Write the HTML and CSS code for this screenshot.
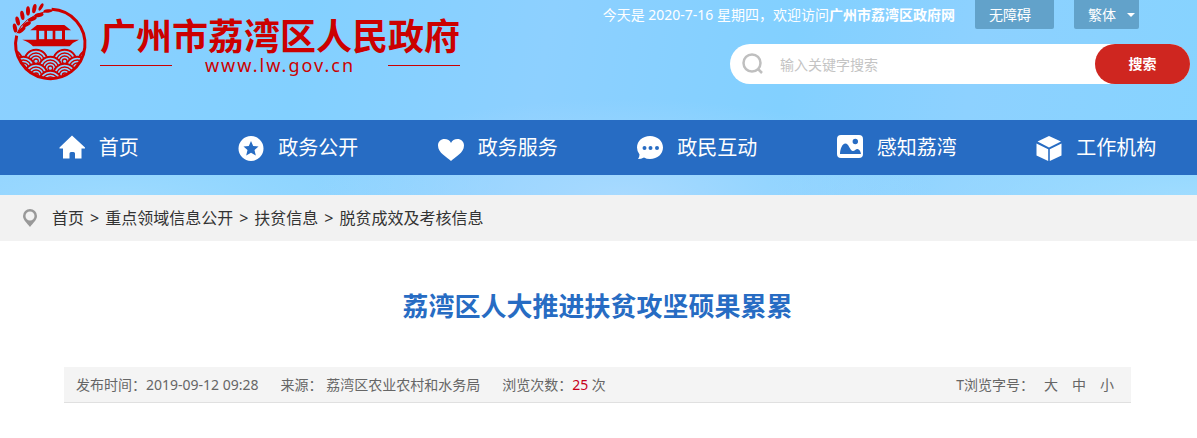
FILE: index.html
```html
<!DOCTYPE html>
<html lang="zh-CN">
<head>
    <meta charset="UTF-8">
    <meta name="viewport" content="width=device-width, initial-scale=1.0">
    <title>荔湾区人大推进扶贫攻坚硕果累累</title>
    <link rel="stylesheet" href="styles.css">
</head>
<body>
    <!-- 头部 -->
    <header class="header">
        <div class="header-top">
            <a class="logo" href="#">
                <svg class="logo-emblem" viewBox="0 0 270 258" aria-hidden="true">
                    <defs>
                        <clipPath id="sea"><circle cx="136" cy="132" r="101"/></clipPath>
                        <g id="wave">
                            <circle r="36" fill="#8bd2ff"/>
                            <circle r="34"/>
                            <circle r="25"/>
                            <circle r="16"/>
                            <circle r="7"/>
                        </g>
                    </defs>
                    <!-- 水波 -->
                    <g clip-path="url(#sea)" fill="none" stroke="#cc0000" stroke-width="4">
                        <use href="#wave" x="17" y="184"/><use href="#wave" x="93" y="184"/><use href="#wave" x="179" y="184"/><use href="#wave" x="255" y="184"/>
                        <use href="#wave" x="55" y="205"/><use href="#wave" x="136" y="205"/><use href="#wave" x="217" y="205"/>
                        <use href="#wave" x="17" y="226"/><use href="#wave" x="93" y="226"/><use href="#wave" x="179" y="226"/><use href="#wave" x="255" y="226"/>
                        <use href="#wave" x="55" y="247"/><use href="#wave" x="136" y="247"/><use href="#wave" x="217" y="247"/>
                    </g>
                    <path d="M140 28A104 104 0 1 1 35 107" fill="none" stroke="#cc0000" stroke-width="9"/>
                    <!-- 画舫 -->
                    <g fill="#cc0000">
                        <path d="M96 75H178L198 91H76Z"/>
                        <path fill-rule="evenodd" d="M94 88H180V121H94ZM102 92V118H118V92ZM126 92V118H143V92ZM151 92V118H171V92Z"/>
                        <path d="M52 119H222Q204 126 194 139H84Q72 125 52 119Z"/>
                    </g>
                    <!-- 稻穗 -->
                    <path d="M36 100Q54 52 126 33" fill="none" stroke="#cc0000" stroke-width="3"/>
                    <g fill="#cc0000">
                        <ellipse cx="30" cy="84" rx="6" ry="14" transform="rotate(-12 30 84)"/>
                        <ellipse cx="38" cy="63" rx="6" ry="14" transform="rotate(-14 38 63)"/>
                        <ellipse cx="52" cy="46" rx="6" ry="14" transform="rotate(-10 52 46)"/>
                        <ellipse cx="69" cy="33" rx="6" ry="14" transform="rotate(0 69 33)"/>
                        <ellipse cx="88" cy="26" rx="6" ry="14" transform="rotate(12 88 26)"/>
                        <ellipse cx="108" cy="21" rx="5" ry="12" transform="rotate(30 108 21)"/>
                        <ellipse cx="50" cy="90" rx="6" ry="14" transform="rotate(50 50 90)"/>
                        <ellipse cx="65" cy="73" rx="6" ry="14" transform="rotate(60 65 73)"/>
                        <ellipse cx="82" cy="57" rx="6" ry="14" transform="rotate(68 82 57)"/>
                        <ellipse cx="102" cy="45" rx="6" ry="14" transform="rotate(78 102 45)"/>
                        <ellipse cx="129" cy="33" rx="5" ry="14" transform="rotate(84 129 33)"/>
                    </g>
                </svg>
                <span class="logo-text">
                    <strong class="logo-name">广州市荔湾区人民政府</strong>
                    <span class="logo-url">www.lw.gov.cn</span>
                </span>
            </a>

            <div class="header-side">
                <div class="tools">
                    <p class="welcome">今天是 2020-7-16 星期四，欢迎访问<b>广州市荔湾区政府网</b></p>
                    <a class="tool-link" href="#">无障碍</a>
                    <div class="lang">
                        <select class="lang-select" aria-label="语言">
                            <option>繁体</option>
                            <option>简体</option>
                        </select>
                    </div>
                </div>
                <form class="search">
                    <svg class="search-icon" viewBox="0 0 22 22" aria-hidden="true">
                        <circle cx="10" cy="10" r="8.5"/>
                        <path d="M16 16L20 20"/>
                    </svg>
                    <input class="search-input" type="text" placeholder="输入关键字搜索" aria-label="输入关键字搜索">
                    <button class="search-btn" type="button">搜索</button>
                </form>
            </div>
        </div>

        <!-- 主导航 -->
        <nav class="nav">
            <a class="nav-item" href="#">
                <svg class="nav-icon" viewBox="0 0 26 26"><path d="M13 0.500L26 12.500V13.500H22.500V23.500H16V18.500Q16 17 14.500 17H12Q10.500 17 10.500 18.500V23.500H4V13.500H0.500V12.500Z"/></svg>
                首页
            </a>
            <a class="nav-item" href="#">
                <svg class="nav-icon" viewBox="0 0 26 26"><path fill-rule="evenodd" d="M13 1A12.500 12.500 0 1 1 13 26A12.500 12.500 0 1 1 13 1ZM13 6L15.200 11L20.500 11.500L16.500 15L17.800 20.500L13 17.700L8.200 20.500L9.500 15L5.500 11.500L10.800 11Z"/></svg>
                政务公开
            </a>
            <a class="nav-item" href="#">
                <svg class="nav-icon" viewBox="0 0 26 26"><path d="M13 26C9 22 0 18 0 10.500C0 6.500 3 4 6.500 4C9.500 4 12 5.500 13 8C14 5.500 16.500 4 19.500 4C23 4 26 6.500 26 10.500C26 18 17 22 13 26Z"/></svg>
                政务服务
            </a>
            <a class="nav-item" href="#">
                <svg class="nav-icon" viewBox="0 0 26 26"><path fill-rule="evenodd" d="M13 1C20.500 1 26 6 26 12.500S20.500 24 13 24Q9.500 24 7 22.500Q4 24 1 24Q2.500 22 2.500 19.500Q0 16.500 0 12.500C0 6 5.500 1 13 1ZM7.500 11A2 2 0 1 0 7.500 15A2 2 0 1 0 7.500 11ZM13.500 11A2 2 0 1 0 13.500 15A2 2 0 1 0 13.500 11ZM20 11A2 2 0 1 0 20 15A2 2 0 1 0 20 11Z"/></svg>
                政民互动
            </a>
            <a class="nav-item" href="#">
                <svg class="nav-icon" viewBox="0 0 26 26"><path fill-rule="evenodd" d="M4 0H22Q26 0 26 4V19Q26 23 22 23H4Q0 23 0 19V4Q0 0 4 0ZM18.300 3.800A2.700 2.700 0 1 0 18.300 9.200A2.700 2.700 0 1 0 18.300 3.800ZM3 19H24C23.500 16 22 13.500 20 14C18 14.500 17.500 16.500 15.500 16C13 15 11.500 8.500 8.500 8.500C5 8.500 3.200 14 3 19Z"/></svg>
                感知荔湾
            </a>
            <a class="nav-item" href="#">
                <svg class="nav-icon" viewBox="0 0 26 26"><path d="M13 1L25 6.500L13 12.500L1.500 6.500ZM0.500 8.500L12.200 14.300V26L0.500 20.500ZM25.500 8.500L13.800 14.300V26L25.500 20.500Z"/></svg>
                工作机构
            </a>
        </nav>
    </header>

    <!-- 当前位置 -->
    <nav class="crumbs">
        <svg class="crumbs-icon" viewBox="0 0 14 18" aria-hidden="true"><path fill-rule="evenodd" d="M7 0A7 7 0 0 1 14 7C14 11 10 14 7 18C4 14 0 11 0 7A7 7 0 0 1 7 0ZM7 2.500A4.500 4.500 0 1 0 7 11.500A4.500 4.500 0 1 0 7 2.500Z"/></svg>
        <a href="#">首页</a>
        <span>&gt;</span>
        <a href="#">重点领域信息公开</a>
        <span>&gt;</span>
        <a href="#">扶贫信息</a>
        <span>&gt;</span>
        <a href="#">脱贫成效及考核信息</a>
    </nav>

    <!-- 正文 -->
    <main class="article">
        <h1 class="title">荔湾区人大推进扶贫攻坚硕果累累</h1>
        <div class="meta">
            <span>发布时间：2019-09-12 09:28</span>
            <span>来源： 荔湾区农业农村和水务局</span>
            <span>浏览次数：<span class="count">25</span> 次</span>
            <div class="font-size">
                <span>T浏览字号：</span>
                <div class="size-list">
                    <button class="size-btn" type="button">大</button>
                    <button class="size-btn" type="button">中</button>
                    <button class="size-btn" type="button">小</button>
                </div>
            </div>
        </div>
    </main>
</body>
</html>
```
FILE: styles.css
```css
/* 整体页面样式 */
* {
    box-sizing: border-box;
}

body {
    margin: 0;
    background-color: #fff;
    color: #333;
    font-family: "Noto Sans", "Noto Sans CJK SC", sans-serif;
    font-size: 14px;
    line-height: 20px;
}

a {
    color: inherit;
    text-decoration: none;
}

button,
input,
select {
    margin: 0;
    padding: 0;
    border: none;
    background: none;
    color: inherit;
    font: inherit;
}

/* 头部 */
.header {
    padding-bottom: 20px;
    background:
        radial-gradient(ellipse at 52% 100%, rgba(175, 220, 255, 0.8), transparent 35%),
        radial-gradient(ellipse at 10% 100%, rgba(165, 222, 255, 0.7), transparent 25%),
        radial-gradient(ellipse at 100% 100%, rgba(165, 222, 255, 0.8), transparent 25%),
        linear-gradient(100deg, #8bd0ff, #83d0ff 25%, #8dd0ff 45%, #82d0ff 65%, #8dd1ff 80%, #86d3ff);
}

.header-top {
    display: flex;
    justify-content: space-between;
    height: 120px;
    padding: 0 7px 0 5px;
}

.logo {
    display: flex;
    align-items: flex-start;
    gap: 5px;
    color: #cc0000;
}

.logo-emblem {
    width: 90px;
    height: 86px;
}

.logo-text {
    display: flex;
    flex-direction: column;
    padding-top: 13px;
}

.logo-name {
    font-family: "Noto Sans CJK SC", sans-serif;
    font-size: 36px;
    font-weight: bold;
    line-height: 42px;
}

.logo-url {
    display: flex;
    align-items: center;
    justify-content: space-between;
    font-size: 18px;
    line-height: 20px;
    letter-spacing: 2px;
}

.logo-url::before,
.logo-url::after {
    content: "";
    width: 72px;
    height: 1px;
    background-color: #cc0000;
}

.header-side {
    display: flex;
    flex-direction: column;
    align-items: flex-end;
    gap: 15px;
}

.tools {
    display: flex;
    gap: 20px;
    padding-right: 51px;
    color: #fff;
    line-height: 29px;
}

.welcome {
    margin: 0;
}

.tool-link {
    padding: 0 23px 0 14px;
    border-radius: 0 0 2px 2px;
    background-color: #62a2ca;
}

.lang {
    position: relative;
}

.lang::after {
    content: "";
    position: absolute;
    top: 13px;
    right: 4px;
    border: 4px solid transparent;
    border-top-color: #fff;
    border-bottom-width: 0;
    pointer-events: none;
}

.lang-select {
    width: 65px;
    height: 29px;
    padding-left: 14px;
    border-radius: 0 0 2px 2px;
    background-color: #62a2ca;
    color: #fff;
    appearance: none;
}

/* 搜索框 */
.search {
    display: flex;
    align-items: center;
    width: 460px;
    height: 40px;
    padding-left: 12px;
    border-radius: 20px;
    background-color: #fff;
}

.search-icon {
    width: 22px;
    height: 22px;
    fill: none;
    stroke: #bfbfbf;
    stroke-width: 2.5;
}

.search-input {
    flex: 1;
    min-width: 0;
    height: 40px;
    padding-left: 16px;
    color: #333;
    outline: none;
}

.search-input::placeholder {
    color: #c4c4c4;
}

.search-btn {
    width: 95px;
    height: 40px;
    border-radius: 20px;
    background-color: #cf2620;
    color: #fff;
    font-weight: bold;
    cursor: pointer;
}

/* 主导航 */
.nav {
    display: grid;
    grid-template-columns: repeat(6, 1fr);
    background-color: #276cc3;
}

.nav-item {
    display: flex;
    align-items: center;
    justify-content: center;
    gap: 14px;
    padding-right: 2px;
    color: #fff;
    font-size: 20px;
    line-height: 55px;
}

.nav-icon {
    width: 26px;
    height: 26px;
    fill: #fff;
}

/* 当前位置 */
.crumbs {
    display: flex;
    align-items: center;
    gap: 6px;
    padding: 0 23px;
    background-color: #f2f2f2;
    font-size: 16px;
    line-height: 46px;
}

.crumbs-icon {
    width: 14px;
    height: 18px;
    margin-right: 9px;
    fill: #999;
}

/* 正文 */
.article {
    padding: 45px 66px 45px 64px;
}

.title {
    margin: 0 0 41px;
    color: #276cc3;
    font-size: 26px;
    line-height: 40px;
    text-align: center;
}

.meta {
    display: flex;
    gap: 22px;
    padding: 0 17px 0 12px;
    border-bottom: 1px solid #e0e0e0;
    background-color: #f4f4f4;
    color: #666;
    line-height: 35px;
}

.count {
    color: #c7001a;
}

.font-size {
    display: flex;
    gap: 10px;
    margin-left: auto;
}

.size-list {
    display: flex;
    gap: 14px;
}

.size-btn {
    cursor: pointer;
}
```
